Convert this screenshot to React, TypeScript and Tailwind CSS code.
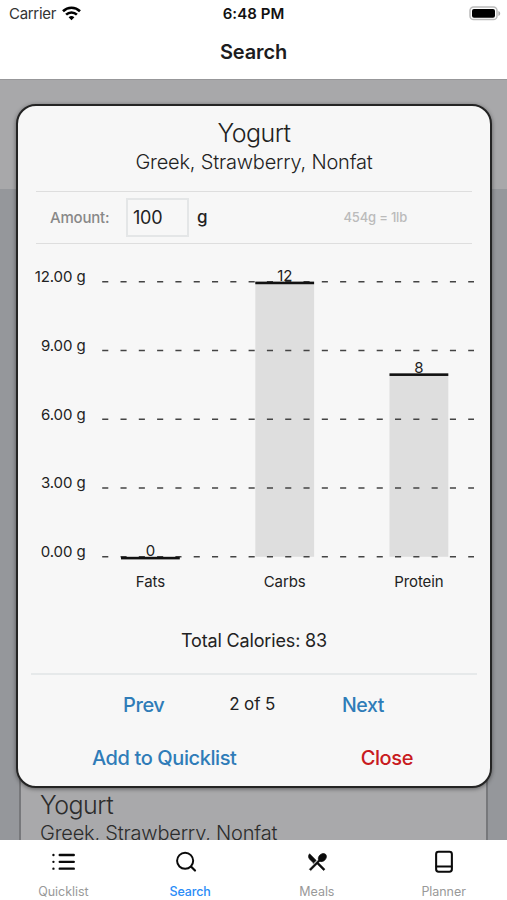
import type { ReactNode } from "react";

const macros = [
  { name: "Fats", value: 0, x: 121 },
  { name: "Carbs", value: 12, x: 255.3 },
  { name: "Protein", value: 8, x: 389.5 },
];

const ticks = [12, 9, 6, 3, 0];

const BAR_WIDTH = 58.8;
const BASE_Y = 556.8;
const UNIT = 22.93;

const yFor = (value: number) => BASE_Y - value * UNIT;

const MacroChart = () => (
  <svg
    width="472"
    height="362"
    viewBox="18 244 472 362"
    className="block text-[15px] tracking-[-0.1px]"
    fill="#222"
  >
    {macros.map((m) => (
      <rect
        key={m.name}
        x={m.x}
        y={yFor(m.value)}
        width={BAR_WIDTH}
        height={m.value * UNIT}
        fill="#dedede"
      />
    ))}
    {ticks.map((t) => (
      <g key={t}>
        <text x="85.5" y={yFor(t) + 0.4} textAnchor="end">
          {t.toFixed(2)} g
        </text>
        <line
          x1="102.2"
          x2="474"
          y1={yFor(t)}
          y2={yFor(t)}
          stroke="#444"
          strokeWidth="1.5"
          strokeDasharray="6.1 12.2"
        />
      </g>
    ))}
    {macros.map((m) => (
      <g key={m.name} textAnchor="middle">
        <rect x={m.x} y={yFor(m.value)} width={BAR_WIDTH} height="2.6" fill="#111" />
        <text x={m.x + BAR_WIDTH / 2} y={yFor(m.value) - 0.8}>
          {m.value}
        </text>
        <text x={m.x + BAR_WIDTH / 2} y="586.5">
          {m.name}
        </text>
      </g>
    ))}
  </svg>
);

const StatusBar = () => (
  <div className="grid grid-cols-3 items-center h-[27px] px-[9px] text-[15px] text-[#111]">
    <div className="flex items-center gap-[6px]">
      <span className="pt-px text-[#333] tracking-[-0.3px]">Carrier</span>
      <svg width="19" height="15" viewBox="0 0 19 15" fill="none" stroke="#000" strokeWidth="2.6">
        <path d="M1 5.2a12.2 12.2 0 0 1 17 0" />
        <path d="M4.1 8.6a7.8 7.8 0 0 1 10.8 0" />
        <path d="M9.5 14.3 6.6 11.3a4.2 4.2 0 0 1 5.8 0z" fill="#000" stroke="none" />
      </svg>
    </div>
    <span className="pt-px text-center font-semibold tracking-[0.05px]">6:48 PM</span>
    <svg className="justify-self-end -mr-[3px]" width="32" height="15" viewBox="0 0 32 15">
      <rect x="1" y="1" width="27" height="12.6" rx="3.6" fill="#fff" stroke="#bbb" strokeWidth="1.5" />
      <rect x="3" y="3" width="23" height="8.8" rx="2" fill="#000" />
      <path d="M29.4 5v5c1.2-.5 1.8-1.4 1.8-2.5S30.6 5.5 29.4 5z" fill="#aaa" />
    </svg>
  </div>
);

const FoodModal = () => (
  <div className="absolute left-[16px] top-[25px] w-[476px] h-[684px] rounded-[20px] border-2 border-[#242424] bg-[#f7f7f7] shadow-[0_1px_4px_rgba(0,0,0,0.45)] flex flex-col overflow-hidden">
    <div className="mx-[18px] h-[86px] pt-[12px] border-b border-[#dedede] text-center font-light text-[#222]">
      <h2 className="text-[25px] leading-[31px] tracking-[-0.5px]">Yogurt</h2>
      <p className="text-[20px] leading-[26px] tracking-[-0.2px]">Greek, Strawberry, Nonfat</p>
    </div>
    <div className="mx-[18px] h-[52px] px-[14px] flex items-center border-b border-[#dedede]">
      <span className="w-[76px] pt-[2px] text-[15px] font-medium tracking-[-0.2px] text-[#888]">Amount:</span>
      <div className="w-[63px] h-[39px] border-2 border-[#e4e6e7] pl-[5px] flex items-center text-[18px] tracking-[-0.2px] text-[#222]">
        100
      </div>
      <span className="ml-[8px] text-[17px] font-medium text-[#222]">g</span>
      <span className="ml-auto mr-[51px] text-[13px] font-medium tracking-[-0.2px] text-[#bbb]">454g = 1lb</span>
    </div>
    <MacroChart />
    <p className="h-[67px] leading-[69px] text-center text-[18px] tracking-[-0.15px] text-[#222]">
      Total Calories: 83
    </p>
    <div className="mx-[13px] border-t-2 border-[#e6e9ea]" />
    <div className="h-[60px] pl-[105px] pr-[106px] flex items-center justify-between text-[20px] font-medium tracking-[-0.4px] text-[#2f7cb8]">
      <button>Prev</button>
      <span className="pr-[2px] text-[17px] font-normal tracking-[-0.1px] text-[#222]">2 of 5</span>
      <button className="pt-px text-[19.5px]">Next</button>
    </div>
    <div className="h-[46px] pl-[74px] pr-[77px] flex items-center justify-between text-[20px] font-medium tracking-[-0.4px]">
      <button className="text-[#2f7cb8]">Add to Quicklist</button>
      <button className="text-[#c81a20]">Close</button>
    </div>
  </div>
);

const Tab = ({ label, active, children }: { label: string; active?: boolean; children: ReactNode }) => (
  <div className="flex-1 flex flex-col items-center pt-[7px]">
    <svg width="32" height="32" viewBox="0 0 32 32" fill="none" stroke="#0a0a0a" strokeLinecap="round">
      {children}
    </svg>
    <span
      className={
        active
          ? "mt-[6px] text-[12.5px] leading-[17px] font-medium tracking-[-0.15px] text-[#2a8cf7]"
          : "mt-[6px] text-[12.5px] leading-[17px] tracking-[-0.05px] text-[#999]"
      }
    >
      {label}
    </span>
  </div>
);

const App = () => {
  return (
    <div className="h-[900px] w-[507px] flex flex-col overflow-hidden bg-white font-['Inter',sans-serif]">
      <StatusBar />
      <h1 className="h-[52px] leading-[50px] text-center text-[20px] font-semibold tracking-[-0.15px] text-[#1c1c1e]">
        Search
      </h1>

      <main className="relative h-[761px] flex flex-col bg-[#95979b] overflow-hidden">
        <div className="h-[110px] bg-[#a8a8aa] border-t border-[#979799]" />
        <div className="mt-auto mx-[19px] h-[90px] pt-[40px] pl-[19px] bg-[#a9a9ab] border-x-2 border-[#77787b] font-light text-[#2c2c2c]">
          <div className="text-[25px] leading-[30px] tracking-[-0.5px]">Yogurt</div>
          <div className="text-[20px] leading-[26px] tracking-[-0.2px]">Greek, Strawberry, Nonfat</div>
        </div>
        <FoodModal />
      </main>

      <nav className="h-[60px] flex bg-white">
        <Tab label="Quicklist">
          <path d="M12.5 8.5h15M12.500 15.8h15M12.5 23.100h15" strokeWidth="2.5" />
          <path d="M5.8 8.5h.01M5.8 15.8h.01M5.8 23.1h.01" strokeWidth="2.5" />
        </Tab>
        <Tab label="Search" active>
          <circle cx="10.8" cy="14.7" r="8.6" strokeWidth="2.1" />
          <path d="M17.3 21l4 4" strokeWidth="2.4" />
        </Tab>
        <Tab label="Meals">
          <path
            transform="translate(4.2 3.8)"
            strokeWidth="0.7"
            fill="#0a0a0a"
            d="M8.1 13.34l2.83-2.83L3.91 3.5c-1.56 1.56-1.56 4.09 0 5.66l4.19 4.18zm6.78-1.81c1.53.71 3.68.21 5.27-1.38 1.91-1.91 2.28-4.65.81-6.12-1.46-1.46-4.2-1.1-6.12.81-1.59 1.59-2.09 3.74-1.38 5.27L3.7 19.87l1.41 1.41L12 14.41l6.88 6.88 1.41-1.41L13.41 13l1.47-1.47z"
          />
        </Tab>
        <Tab label="Planner">
          <rect x="7.6" y="5" width="16.8" height="21.4" rx="2.6" strokeWidth="2.2" />
          <path d="M8 20.8h16" strokeWidth="2" />
        </Tab>
      </nav>
    </div>
  );
};

export default App;
